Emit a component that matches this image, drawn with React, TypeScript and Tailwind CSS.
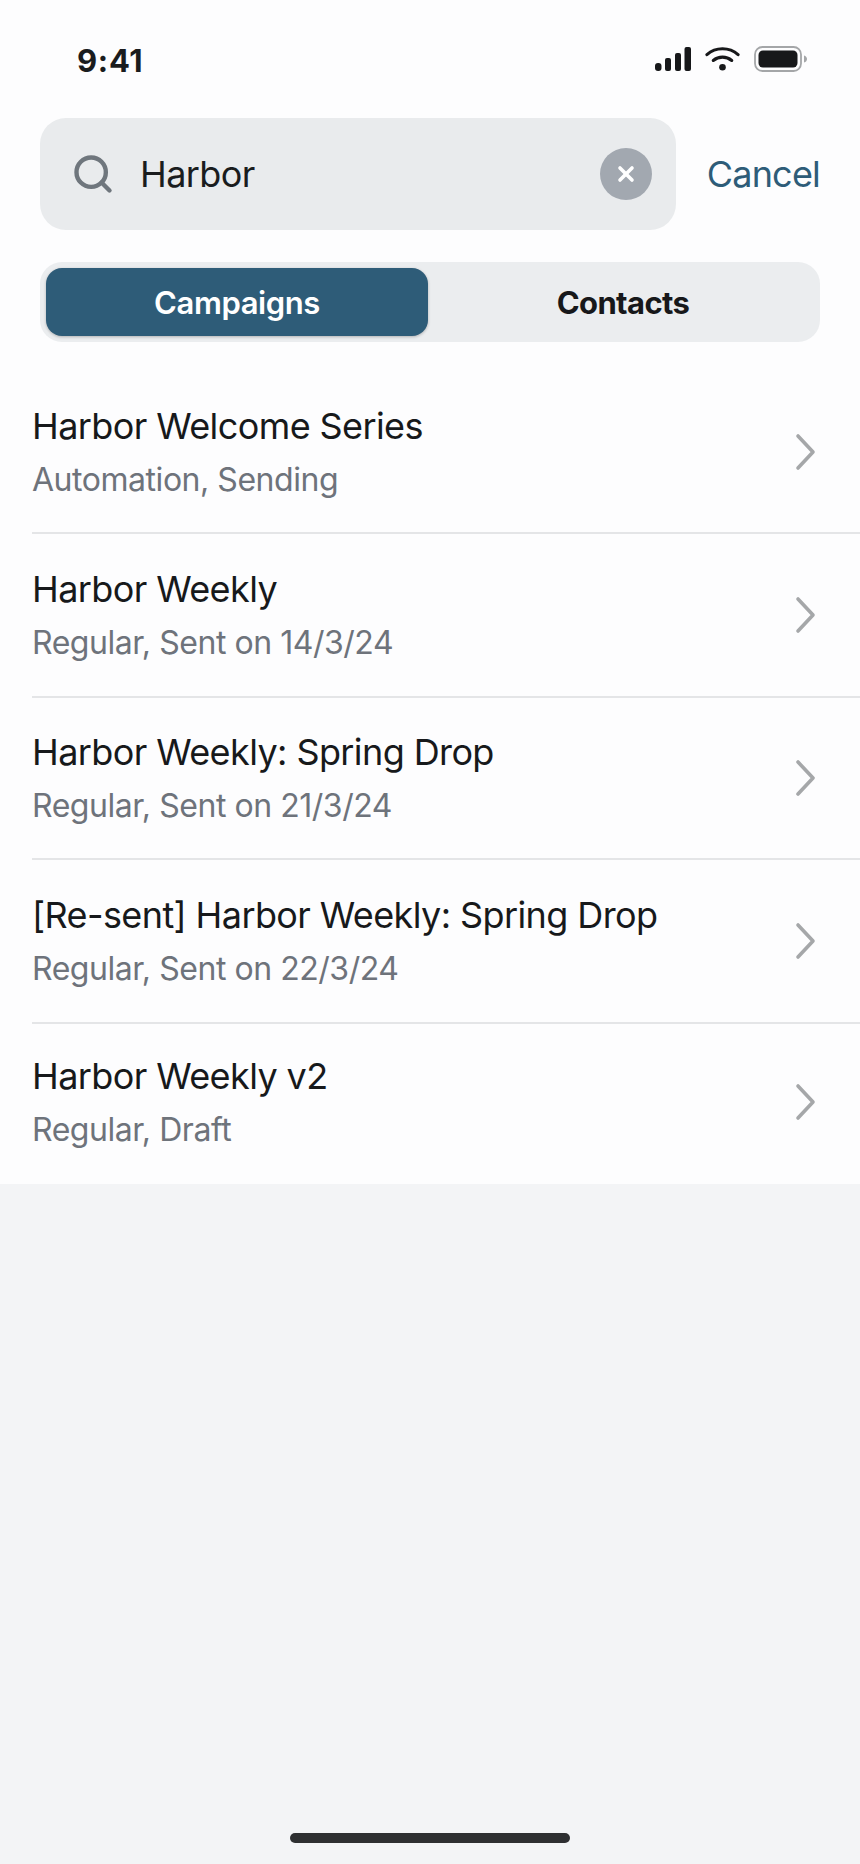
import { Search, X } from 'lucide-react';

type Row = {
  title: string;
  subtitle: string;
  height: string;
};

const rows: Row[] = [
  { title: 'Harbor Welcome Series', subtitle: 'Automation, Sending', height: 'h-[192px]' },
  { title: 'Harbor Weekly', subtitle: 'Regular, Sent on 14/3/24', height: 'h-[164px]' },
  { title: 'Harbor Weekly: Spring Drop', subtitle: 'Regular, Sent on 21/3/24', height: 'h-[162px]' },
  { title: '[Re-sent] Harbor Weekly: Spring Drop', subtitle: 'Regular, Sent on 22/3/24', height: 'h-[164px]' },
  { title: 'Harbor Weekly v2', subtitle: 'Regular, Draft', height: 'h-[161px]' }
];

const StatusBar = () => (
  <div className="flex h-[118px] items-start justify-between pl-[77px] pr-[52px] pt-[42px]">
    <span className="text-[31px] leading-[37px] font-bold tracking-[0.7px] text-[#1a1c1e]">9:41</span>
    <div className="flex items-center gap-[14px] pt-[4px]">
      <svg width="36" height="25" viewBox="0 0 36 25" fill="#17181a">
        <rect x="0" y="16" width="6.5" height="8" rx="3" />
        <rect x="10" y="11" width="6" height="13" rx="2" />
        <rect x="20" y="6" width="6" height="18" rx="2" />
        <rect x="29.5" y="0" width="6.5" height="24" rx="2" />
      </svg>
      <svg width="35" height="26" viewBox="0 0 36 26" fill="none" stroke="#17181a" strokeWidth="3.2" strokeLinecap="round">
        <path d="M2 8.5C11 0.5 25 0.5 34 8.5" />
        <path d="M8.5 14.5C14 10 22 10 27.5 14.5" />
        <circle cx="18" cy="21.5" r="3.4" fill="#17181a" stroke="none" />
      </svg>
      <svg width="54" height="26" viewBox="0 0 54 26" fill="none">
        <rect x="1" y="1" width="46" height="24" rx="7.5" stroke="#a4a6a8" strokeWidth="1.8" />
        <rect x="4.5" y="4.5" width="39" height="17" rx="4.5" fill="#17181a" />
        <path d="M50 9.5c2 .5 3 2 3 3.5s-1 3-3 3.5z" fill="#a4a6a8" />
      </svg>
    </div>
  </div>
);

const SearchHeader = () => (
  <div className="flex items-center px-10">
    <div className="flex h-[112px] w-[636px] items-center rounded-[26px] bg-[#e9ebed] pl-[31px] pr-6">
      <Search size={44} strokeWidth={2.4} className="text-[#6f767d]" />
      <span className="ml-[25px] flex-1 text-[36px] leading-none tracking-[-0.6px] text-[#1a1c1e]">Harbor</span>
      <div className="flex h-[52px] w-[52px] items-center justify-center rounded-full bg-[#a2a8b0]">
        <X size={24} strokeWidth={3.6} className="text-white" />
      </div>
    </div>
    <span className="ml-auto text-[36px] leading-none tracking-[-0.8px] text-[#2e5c78]">Cancel</span>
  </div>
);

const Tabs = () => (
  <div className="mx-10 mt-8 flex h-20 items-center rounded-[22px] bg-[#ebedef] p-1.5">
    <div className="flex h-[68px] w-[382px] flex-none items-center justify-center rounded-[16px] bg-[#2e5c78] pt-[2px] text-[31px] font-semibold tracking-[-0.4px] text-white shadow-[0_1px_3px_rgba(0,0,0,0.25)]">
      Campaigns
    </div>
    <div className="flex flex-1 items-center justify-center pl-1 pt-[2px] text-[31px] font-bold tracking-[-0.6px] text-[#17181a]">Contacts</div>
  </div>
);

const Chevron = () => (
  <svg width="22" height="38" viewBox="0 0 22 38" fill="none" stroke="#a5a7a9" strokeWidth="3.6" strokeLinecap="round" strokeLinejoin="round" className="mr-[43px] flex-none">
    <path d="M3 3L18 19L3 35" />
  </svg>
);

const ResultRow = ({ row, last, first }: { row: Row; last: boolean; first: boolean }) => (
  <div className={`ml-8 flex items-center ${row.height} ${first ? 'pt-[30px]' : ''} ${last ? 'pb-[5px]' : 'border-b-2 border-[#e4e5e7]'}`}>
    <div className="min-w-0 flex-1">
      <div className="text-[36px] leading-[44px] tracking-[-0.6px] text-[#17191b]">{row.title}</div>
      <div className="mt-3 text-[32px] leading-[40px] tracking-[-0.46px] text-[#6e737b]">{row.subtitle}</div>
    </div>
    <Chevron />
  </div>
);

export default function App() {
  return (
    <div className="flex h-[1864px] w-[860px] flex-col bg-[#f3f4f6] font-['Inter',sans-serif]">
      <div className="h-[1184px] flex-none bg-[#fdfdfe]">
        <StatusBar />
        <SearchHeader />
        <Tabs />
        {rows.map((row, i) => (
          <ResultRow key={row.title} row={row} first={i === 0} last={i === rows.length - 1} />
        ))}
      </div>
      <div className="flex flex-1 items-end justify-center pb-[21px]">
        <div className="h-2.5 w-[280px] rounded-full bg-[#2e2f31]" />
      </div>
    </div>
  );
}
